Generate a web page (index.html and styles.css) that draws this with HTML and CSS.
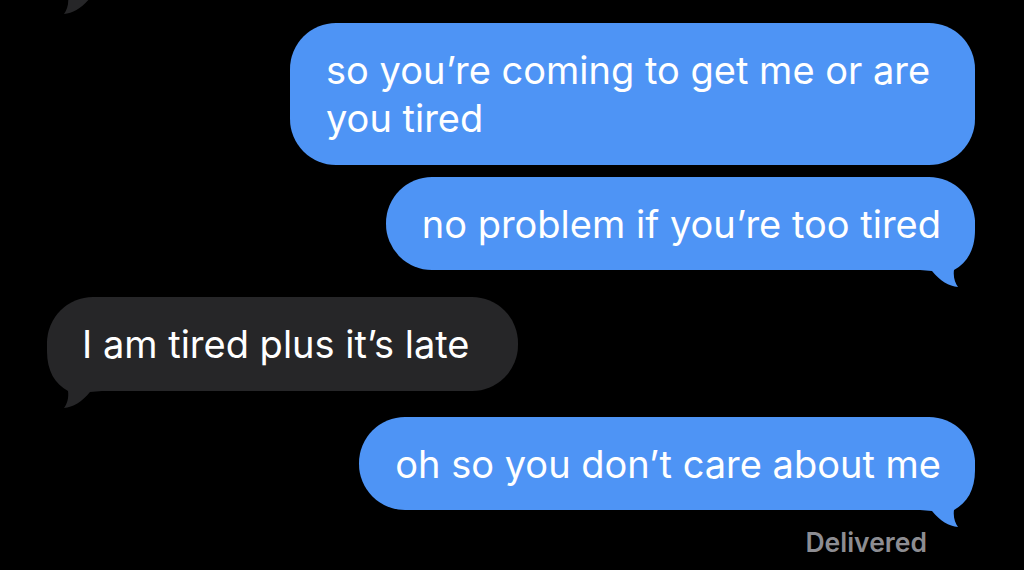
FILE: index.html
```html
<!DOCTYPE html>
<html lang="en">
<head>
    <meta charset="UTF-8">
    <meta name="viewport" content="width=device-width, initial-scale=1.0">
    <title>Messages</title>
    <link rel="stylesheet" href="styles.css">
</head>
<body>
    <div class="thread">
        <div class="row received ghost">
            <div class="bubble">
                <svg class="tail" viewBox="0 0 60 70" width="60" height="70"><path d="M0 0H55V10C55 30 47 43 34 50C33 57 35 63 38 67C29 66 20 61 12 51L0 50Z"/></svg>
            </div>
        </div>

        <div class="row sent first">
            <div class="bubble">so you’re coming to get me or are you tired</div>
        </div>

        <div class="row sent grouped">
            <div class="bubble">no problem if you’re too tired
                <svg class="tail" viewBox="0 0 60 70" width="60" height="70"><path d="M0 0H55V10C55 30 47 43 34 50C33 57 35 63 38 67C29 66 20 61 12 51L0 50Z"/></svg>
            </div>
        </div>

        <div class="row received">
            <div class="bubble">I am tired plus it’s late
                <svg class="tail" viewBox="0 0 60 70" width="60" height="70"><path d="M0 0H55V10C55 30 47 43 34 50C33 57 35 63 38 67C29 66 20 61 12 51L0 50Z"/></svg>
            </div>
        </div>

        <div class="row sent">
            <div class="bubble">oh so you don’t care about me
                <svg class="tail" viewBox="0 0 60 70" width="60" height="70"><path d="M0 0H55V10C55 30 47 43 34 50C33 57 35 63 38 67C29 66 20 61 12 51L0 50Z"/></svg>
            </div>
        </div>

        <div class="status">Delivered</div>
    </div>
</body>
</html>
```

FILE: styles.css
```css
body {
    margin: 0;
    background-color: #000;
    font-family: Inter, "Open Sans", sans-serif;
    height: 570px;
    overflow: hidden;
}

.thread {
    display: flex;
    flex-direction: column;
    padding: 0 49px 0 47px;
}

.row {
    display: flex;
    margin-top: 26px;
}

.row.sent {
    justify-content: flex-end;
}

.row.received {
    justify-content: flex-start;
    margin-top: 27px;
}

.row.grouped {
    margin-top: 12px;
}

.bubble {
    position: relative;
    isolation: isolate;
    box-sizing: border-box;
    max-width: 685px;
    padding: 23px 34px 22.5px 36px;
    border-radius: 46px;
    font-size: 38px;
    line-height: 48px;
    color: #fff;
}

.sent .bubble {
    background-color: #4e94f5;
}

.received .bubble {
    background-color: #262628;
    padding-left: 35px;
    padding-right: 49px;
}

.tail {
    position: absolute;
    z-index: -1;
    bottom: -20px;
    display: block;
}

.sent .tail {
    right: -5px;
    fill: #4e94f5;
}

.received .tail {
    left: -5px;
    fill: #262628;
    transform: scaleX(-1);
}

.row.ghost {
    margin-top: -3px;
}

.ghost .bubble {
    width: 400px;
    height: 0;
    padding: 0;
    background: none;
}

.status {
    align-self: flex-end;
    margin-top: 17px;
    margin-right: 48px;
    font-size: 26.5px;
    line-height: 30px;
    font-weight: 600;
    color: #8d8d92;
}
```
